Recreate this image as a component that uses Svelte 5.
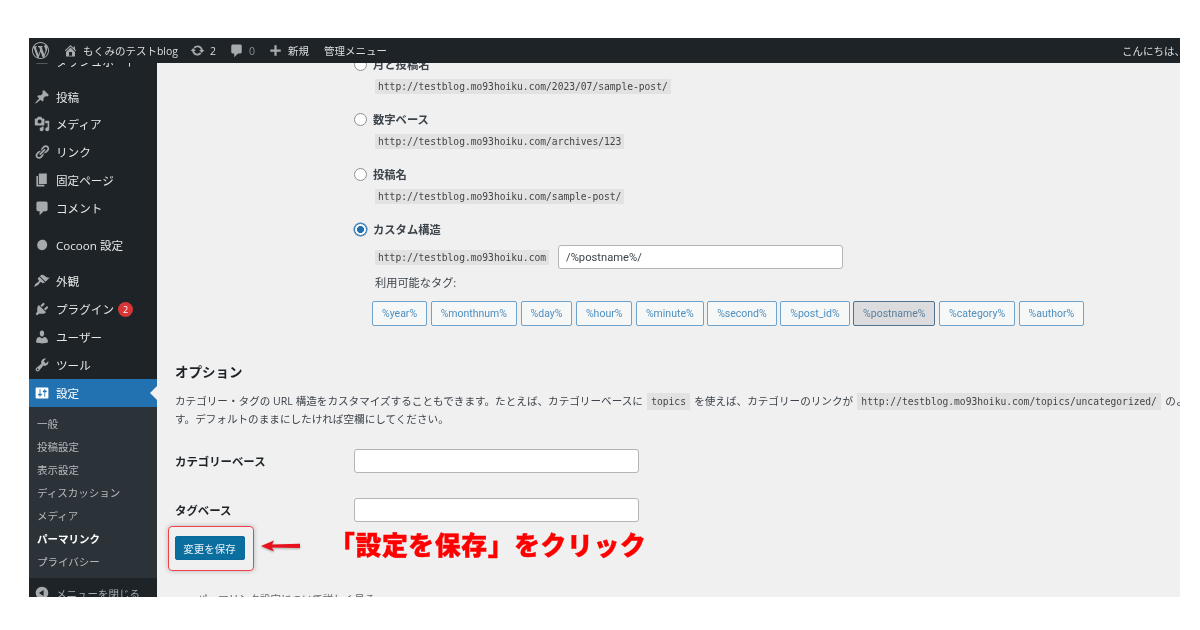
<script>
	const icons = {
		wp: 'M20 10c0-5.51-4.49-10-10-10C4.48 0 0 4.49 0 10c0 5.52 4.48 10 10 10 5.51 0 10-4.48 10-10zM7.78 15.37L4.37 6.22c.55-.02 1.17-.08 1.17-.08.5-.06.44-1.13-.06-1.11 0 0-1.45.11-2.37.11-.18 0-.37 0-.58-.01C4.12 2.69 6.87 1.11 10 1.11c2.33 0 4.45.87 6.05 2.34-.68-.11-1.65.39-1.65 1.58 0 .74.45 1.36.9 2.1.35.61.55 1.36.55 2.46 0 1.49-1.4 5-1.4 5l-3.03-8.37c.54-.02.82-.17.82-.17.5-.05.44-1.25-.06-1.22 0 0-1.44.12-2.38.12-.87 0-2.33-.12-2.33-.12-.5-.03-.56 1.2-.06 1.22l.92.08 1.26 3.41zM17.41 10c.24-.64.74-1.87.43-4.25.7 1.29 1.05 2.71 1.05 4.25 0 3.29-1.73 6.24-4.4 7.78.97-2.59 1.94-5.2 2.92-7.78zM6.1 18.09C3.12 16.65 1.11 13.53 1.11 10c0-1.3.23-2.48.72-3.59C3.25 10.3 4.67 14.2 6.1 18.09zm4.03-6.63l2.58 6.98c-.86.29-1.76.45-2.71.45-.79 0-1.57-.11-2.29-.33.81-2.38 1.62-4.74 2.42-7.1z',
		home: 'M16 8.5l1.53 1.53-1.06 1.06L10 4.62l-6.47 6.47-1.06-1.06L10 2.5l4 4v-2h2v4zm-6-2.46l6 5.99V18H4v-5.97zM12 17v-5H8v5h4z',
		update: 'M10.2 3.28c3.53 0 6.43 2.61 6.92 6h2.08l-3.5 4-3.5-4h2.32c-.45-1.97-2.21-3.45-4.32-3.45-1.45 0-2.73.71-3.54 1.78L4.95 5.66C6.23 4.2 8.11 3.28 10.2 3.28zm-.4 13.44c-3.52 0-6.43-2.61-6.92-6H.8l3.5-4c1.17 1.33 2.33 2.67 3.5 4H5.48c.45 1.97 2.21 3.45 4.32 3.45 1.45 0 2.73-.71 3.54-1.78l1.71 1.95c-1.28 1.46-3.15 2.38-5.25 2.38z',
		comment: 'M5 2h10c1.1 0 2 .9 2 2v8c0 1.1-.9 2-2 2h-3l-5 5v-5H5c-1.1 0-2-.9-2-2V4c0-1.1.9-2 2-2z',
		plus: 'M17 8.5v3h-5.5V17h-3v-5.5H3v-3h5.5V3h3v5.5z',
		dashboard: 'M3 10h14v3H3z',
		pin: 'M10.44 3.02l1.82-1.82 6.36 6.35-1.83 1.82c-1.05-.68-2.48-.57-3.41.36l-.75.75c-.92.93-1.04 2.35-.35 3.41l-1.83 1.82-2.41-2.41-2.8 2.79c-.42.42-3.38 2.71-3.8 2.29s1.86-3.39 2.28-3.81l2.79-2.79L4.1 9.36l1.83-1.82c1.05.69 2.48.57 3.4-.36l.75-.75c.93-.92 1.05-2.35.36-3.41z',
		media: 'M13 11V4c0-.55-.45-1-1-1h-1.67L9 1H5L3.67 3H2c-.55 0-1 .45-1 1v7c0 .55.45 1 1 1h10c.55 0 1-.45 1-1zM7 4.5c1.38 0 2.5 1.12 2.5 2.5S8.38 9.5 7 9.5 4.5 8.38 4.5 7 5.62 4.5 7 4.5zM14 6h5v10.5c0 1.38-1.12 2.5-2.5 2.5S14 17.88 14 16.5s1.12-2.5 2.5-2.5c.17 0 .34.02.5.05V9h-3V6zm-4 8.05V13h2v3.5c0 1.38-1.12 2.5-2.5 2.5S7 17.88 7 16.5 8.12 14 9.5 14c.17 0 .34.02.5.05z',
		link: 'M17.74 2.76c1.68 1.69 1.68 4.41 0 6.1l-1.53 1.52c-1.12 1.12-2.7 1.47-4.14 1.09l2.62-2.61.76-.77.76-.76c.84-.84.84-2.2 0-3.04-.84-.85-2.2-.85-3.04 0l-.77.76-3.38 3.38c-.37-1.44-.02-3.02 1.1-4.14l1.52-1.53c1.69-1.68 4.42-1.68 6.1 0zM8.59 13.43l5.34-5.34c.42-.42.42-1.1 0-1.52-.44-.43-1.13-.39-1.53 0l-5.33 5.34c-.42.42-.42 1.1 0 1.52.44.43 1.13.39 1.52 0zm-.76 2.29l4.14-4.15c.38 1.44.03 3.02-1.09 4.14l-1.52 1.53c-1.69 1.68-4.41 1.68-6.1 0-1.68-1.68-1.68-4.42 0-6.1l1.53-1.52c1.12-1.12 2.7-1.47 4.14-1.1l-4.14 4.15c-.85.84-.85 2.2 0 3.05.84.84 2.2.84 3.04 0z',
		pages: 'M6 15V2h10v13H6zm-1 1h8v2H3V5h2v11z',
		cocoon: 'M10.5 3.5c3.6 0 6 2.6 6 6.3 0 3.8-2.8 6.7-6.5 6.7-3.6 0-6-2.5-6-6.1 0-3.9 2.8-6.9 6.5-6.9z',
		brush: 'M14.48 11.06L7.41 3.99l1.5-1.5c.5-.56 2.3-.47 3.51.32 1.21.8 1.43 1.28 2.91 2.1 1.18.64 2.45 1.26 4.45.85zm-.71.71L6.7 4.7 4.93 6.47c-.39.39-.39 1.02 0 1.41l1.06 1.06c.39.39.39 1.03 0 1.42-.6.6-1.43 1.11-2.21 1.69-.35.26-.7.53-1.01.84C1.43 13.71 0 17.6 0 17.6s3.89-1.43 5.29-2.83c.31-.31.58-.66.84-1.01.58-.78 1.09-1.61 1.69-2.21.39-.39 1.03-.39 1.42 0l1.06 1.06c.39.39 1.02.39 1.41 0z',
		plugin: 'M13.11 4.36L9.87 7.6 8 5.73l3.24-3.24c.35-.34 1.05-.2 1.56.32.52.51.66 1.21.31 1.55zm-8 1.77l.91-1.12 9.01 9.01-1.19.84c-.71.71-2.63 1.16-3.82 1.16H6.14L4.9 17.26c-.59.59-1.54.59-2.12 0-.59-.58-.59-1.53 0-2.12l1.24-1.24v-3.88c0-1.13.4-3.19 1.09-3.89zm7.26 3.97l3.24-3.24c.34-.35 1.04-.21 1.55.31.52.51.66 1.21.31 1.55l-3.24 3.25z',
		user: 'M10 9.25c-2.27 0-2.73-3.44-2.73-3.44C7 4.02 7.82 2 9.97 2c2.16 0 2.98 2.02 2.71 3.81 0 0-.41 3.44-2.68 3.44zm0 2.57L12.72 10c2.39 0 4.52 2.33 4.52 4.53v2.49s-3.65 1.13-7.24 1.13c-3.65 0-7.24-1.13-7.24-1.13v-2.49c0-2.25 1.94-4.48 4.47-4.48z',
		wrench: 'M16.68 9.77c-1.34 1.34-3.3 1.67-4.95.99l-5.41 6.52c-.99.99-2.59.99-3.58 0s-.99-2.59 0-3.57l6.52-5.42c-.68-1.65-.35-3.61.99-4.95 1.28-1.28 3.12-1.62 4.72-1.06l-2.89 2.89 2.82 2.82 2.86-2.87c.53 1.58.18 3.39-1.08 4.65zM3.81 16.21c.4.39 1.04.39 1.43 0 .4-.4.4-1.04 0-1.43-.39-.4-1.03-.4-1.43 0-.39.39-.39 1.03 0 1.43z',
		settings: 'M18 16V4c0-.55-.45-1-1-1H3c-.55 0-1 .45-1 1v12c0 .55.45 1 1 1h14c.55 0 1-.45 1-1zM8 11h1c.55 0 1 .45 1 1s-.45 1-1 1H8v1.5c0 .28-.22.5-.5.5s-.5-.22-.5-.5V13H6c-.55 0-1-.45-1-1s.45-1 1-1h1V5.5c0-.28.22-.5.5-.5s.5.22.5.5V11zm5-2h-1c-.55 0-1-.45-1-1s.45-1 1-1h1V5.5c0-.28.22-.5.5-.5s.5.22.5.5V7h1c.55 0 1 .45 1 1s-.45 1-1 1h-1v5.5c0 .28-.22.5-.5.5s-.5-.22-.5-.5V9z',
		collapse: 'M10 2.16c4.33 0 7.84 3.51 7.84 7.84s-3.51 7.84-7.84 7.84S2.16 14.33 2.16 10 5.71 2.16 10 2.16zm2 11.72V6.12L6.18 9.97z'
	};

	const menuGroups = [
		[{ icon: 'dashboard', label: 'ダッシュボード' }],
		[
			{ icon: 'pin', label: '投稿' },
			{ icon: 'media', label: 'メディア' },
			{ icon: 'link', label: 'リンク' },
			{ icon: 'pages', label: '固定ページ' },
			{ icon: 'comment', label: 'コメント' }
		],
		[{ icon: 'cocoon', label: 'Cocoon 設定' }],
		[
			{ icon: 'brush', label: '外観' },
			{ icon: 'plugin', label: 'プラグイン', badge: 2 },
			{ icon: 'user', label: 'ユーザー' },
			{ icon: 'wrench', label: 'ツール' },
			{ icon: 'settings', label: '設定', active: true }
		]
	];

	const submenu = ['一般', '投稿設定', '表示設定', 'ディスカッション', 'メディア', 'パーマリンク', 'プライバシー'];

	const structures = [
		{ label: '月と投稿名', url: 'http://testblog.mo93hoiku.com/2023/07/sample-post/' },
		{ label: '数字ベース', url: 'http://testblog.mo93hoiku.com/archives/123' },
		{ label: '投稿名', url: 'http://testblog.mo93hoiku.com/sample-post/' }
	];

	const tags = ['%year%', '%monthnum%', '%day%', '%hour%', '%minute%', '%second%', '%post_id%', '%postname%', '%category%', '%author%'];
</script>

{#snippet icon(name, size = 16)}
	<svg class="icon" width={size} height={size} viewBox="0 0 20 20" aria-hidden="true"><path d={icons[name]} /></svg>
{/snippet}

<div class="shot">
	<header class="adminbar">
		<span class="bar-item logo">{@render icon('wp', 17)}</span>
		<span class="bar-item site">{@render icon('home', 15)}<span>もくみのテストblog</span></span>
		<span class="bar-item updates">{@render icon('update', 15)}<span>2</span></span>
		<span class="bar-item comments">{@render icon('comment', 15)}<span class="dim">0</span></span>
		<span class="bar-item new">{@render icon('plus', 15)}<span>新規</span></span>
		<span class="bar-item manage">管理メニュー</span>
		<span class="greeting">こんにちは、</span>
	</header>

	<aside class="sidebar">
		<div class="menu">
			{#each menuGroups as group}
				<ul class="group">
					{#each group as item}
						<li class="item" class:active={item.active}>
							{@render icon(item.icon)}
							<span>{item.label}</span>
							{#if item.badge}
								<span class="badge">{item.badge}</span>
							{/if}
						</li>
					{/each}
				</ul>
			{/each}
			<ul class="submenu">
				{#each submenu as sub}
					<li class:current={sub === 'パーマリンク'}>{sub}</li>
				{/each}
			</ul>
			<div class="collapse">
				{@render icon('collapse')}
				<span>メニューを閉じる</span>
			</div>
		</div>
	</aside>

	<main class="content">
		<div class="structures">
			{#each structures as s}
				<div class="structure">
					<label class="choice"><input type="radio" name="structure" /><span>{s.label}</span></label>
					<code class="url">{s.url}</code>
				</div>
			{/each}
			<div class="structure">
				<label class="choice"><input type="radio" name="structure" checked /><span>カスタム構造</span></label>
				<div class="custom">
					<code>http://testblog.mo93hoiku.com</code>
					<input class="field wide" type="text" value="/%postname%/" />
				</div>
				<p class="tags-label">利用可能なタグ:</p>
				<div class="tags">
					{#each tags as t}
						<button class="tag" class:on={t === '%postname%'}>{t}</button>
					{/each}
				</div>
			</div>
		</div>

		<h2>オプション</h2>
		<p class="desc">
			カテゴリー・タグの URL 構造をカスタマイズすることもできます。たとえば、カテゴリーベースに <code>topics</code> を使えば、カテゴリーのリンクが <code>http://testblog.mo93hoiku.com/topics/uncategorized/</code> のようになります。空<br />す。デフォルトのままにしたければ空欄にしてください。
		</p>

		<div class="form-row first">
			<span class="form-label">カテゴリーベース</span>
			<input class="field" type="text" />
		</div>
		<div class="form-row">
			<span class="form-label">タグベース</span>
			<input class="field" type="text" />
		</div>

		<div class="save-row">
			<div class="ring"><button class="save">変更を保存</button></div>
			<svg class="arrow" width="42" height="14" viewBox="0 0 42 14" aria-hidden="true"><path d="M1 7l13-5.5-2 4 28-.8v4.2L12 8.6l2 4z" /></svg>
			<strong class="callout">「設定を保存」をクリック</strong>
		</div>

		<p class="cutoff">パーマリンク設定について詳しく見る</p>
	</main>
</div>

<style>
	:global(body) {
		background: #fff;
	}

	.shot {
		display: grid;
		grid-template-columns: 128px 1fr;
		grid-template-rows: 25px 1fr;
		width: 1151px;
		height: 559px;
		margin: 38px 0 0 29px;
		overflow: hidden;
		background: #f0f0f0;
		color: #3c434a;
		font-family: 'Open Sans', 'Noto Sans CJK JP', sans-serif;
		font-size: 10.5px;
		filter: blur(0.45px);
	}

	ul {
		list-style: none;
		margin: 0;
		padding: 0;
	}

	.icon {
		flex: none;
		fill: currentColor;
	}

	/* admin bar */
	.adminbar {
		grid-column: 1 / -1;
		display: flex;
		align-items: center;
		background: #1d2327;
		color: #dcdcde;
		white-space: nowrap;
	}

	.bar-item {
		display: flex;
		align-items: center;
		gap: 5px;
	}

	.adminbar .icon {
		color: #a7aaad;
	}

	.logo {
		margin-left: 3px;
	}

	.site {
		margin-left: 14px;
	}

	.updates {
		margin-left: 12px;
	}

	.comments {
		margin-left: 13px;
	}

	.new {
		margin-left: 13px;
	}

	.manage {
		margin-left: 15px;
	}

	.dim {
		color: #8a8f94;
	}

	.greeting {
		margin-left: auto;
		margin-right: -5px;
		flex: none;
	}

	/* sidebar */
	.sidebar {
		overflow: hidden;
		background: #1d2327;
		color: #e6e6e7;
		font-size: 11.6px;
	}

	.menu {
		margin-top: -16px;
	}

	.group {
		margin-bottom: 9px;
	}

	.group:first-child {
		margin-bottom: 8px;
	}

	.group:nth-child(4) {
		margin-bottom: 0;
	}

	.item {
		position: relative;
		display: flex;
		align-items: center;
		gap: 6px;
		height: 27.8px;
		padding-left: 5px;
		white-space: nowrap;
	}

	.item .icon {
		color: #a7aaad;
	}

	.item.active {
		background: #2271b1;
		color: #fff;
	}

	.item.active .icon {
		color: #fff;
	}

	.item.active::after {
		content: '';
		position: absolute;
		right: 0;
		top: 50%;
		margin-top: -7px;
		border: 7px solid transparent;
		border-left-width: 0;
		border-right-color: #f0f0f0;
	}

	.badge {
		display: flex;
		align-items: center;
		justify-content: center;
		width: 15px;
		height: 15px;
		margin-left: -2px;
		border-radius: 50%;
		background: #d63638;
		color: #fff;
		font-size: 9px;
	}

	.submenu {
		padding: 6.5px 0 4px 8px;
		background: #2c3338;
		color: #b4b9be;
		font-size: 10.5px;
	}

	.submenu li {
		height: 23px;
		line-height: 23px;
		white-space: nowrap;
	}

	.submenu .current {
		color: #fff;
		font-weight: 700;
	}

	.collapse {
		display: flex;
		align-items: center;
		gap: 6px;
		height: 28px;
		margin-top: 1px;
		padding-left: 5px;
		color: #a7aaad;
		white-space: nowrap;
		font-size: 10.5px;
	}

	/* content */
	.content {
		overflow: hidden;
		min-width: 0;
		padding-left: 18px;
		white-space: nowrap;
	}

	.structures {
		display: flex;
		flex-direction: column;
		gap: 16px;
		margin-top: -8px;
		margin-left: 179px;
	}

	.structure {
		display: flex;
		flex-direction: column;
		align-items: flex-start;
	}

	.choice {
		display: flex;
		align-items: center;
		gap: 6px;
		height: 18px;
		font-size: 11.3px;
		font-weight: 700;
	}

	.choice input {
		appearance: none;
		flex: none;
		width: 13px;
		height: 13px;
		margin: 0;
		border: 1px solid #8c8f94;
		border-radius: 50%;
		background: #fff;
	}

	.choice input:checked {
		border-color: #2271b1;
		box-shadow: 0 0 0 0.5px #2271b1;
		background: radial-gradient(circle, #2271b1 3.2px, #fff 3.8px);
	}

	code {
		padding: 3px 3px;
		background: #e2e2e2;
		color: #444;
		font-family: 'DejaVu Sans Mono', monospace;
		font-size: 9.65px;
		line-height: 1;
	}

	.desc code {
		padding: 3px 4.5px;
		margin: 0 1px;
	}

	.url {
		margin: 5.5px 0 0 21px;
	}

	.custom {
		display: flex;
		align-items: center;
		gap: 9px;
		margin: 7px 0 0 21px;
	}

	.field {
		box-sizing: border-box;
		width: 285px;
		height: 24px;
		padding: 0 7px;
		border: 1px solid #b4b4b4;
		border-radius: 3px;
		background: #fff;
		color: #3c434a;
		font-family: 'Roboto', sans-serif;
		font-size: 11.2px;
	}

	.tags-label {
		margin: 5px 0 0 21px;
		font-size: 11.2px;
		line-height: 18px;
	}

	.tags {
		display: flex;
		gap: 3.5px;
		margin: 9px 0 0 18px;
	}

	.tag {
		height: 25px;
		padding: 0 9px;
		border: 1px solid #6fa3cc;
		border-radius: 2px;
		background: #f6f7f7;
		color: #4f8fbe;
		font-family: 'Roboto', sans-serif;
		font-size: 10.5px;
	}

	.tag.on {
		border-color: #4f7390;
		background: #dcdcde;
		color: #5a7f9e;
	}

	h2 {
		margin: 36px 0 0;
		color: #1d2327;
		font-size: 13.5px;
		font-weight: 700;
		line-height: 20px;
	}

	.desc {
		margin: 10px 0 0;
		font-size: 10.6px;
		line-height: 18px;
	}

	.form-row {
		display: grid;
		grid-template-columns: 179px 285px;
		align-items: center;
		margin-top: 25px;
	}

	.form-row.first {
		margin-top: 21px;
	}

	.form-label {
		color: #1d2327;
		font-size: 11.4px;
		font-weight: 700;
	}

	.save-row {
		display: flex;
		align-items: center;
		margin-top: 4px;
		margin-left: -7px;
	}

	.ring {
		padding: 9px 8.5px 9.5px 5.5px;
		border: 1.5px solid #f0404a;
		border-radius: 4px;
		box-shadow: 0 0 5px rgba(0, 0, 0, 0.25);
	}

	.save {
		display: block;
		width: 70px;
		height: 24px;
		padding: 0;
		border: 1px solid #0a6a9c;
		border-radius: 2px;
		background: #0a6f9f;
		color: #e8f0f5;
		font-family: 'Noto Sans CJK JP', sans-serif;
		font-size: 10.5px;
	}

	.arrow {
		flex: none;
		margin: 0 0 6px 6px;
		fill: #e8101c;
		filter: drop-shadow(0 1px 1px rgba(0, 0, 0, 0.3));
	}

	.callout {
		margin: 0 0 10px 27px;
		color: #f00;
		font-family: 'Noto Sans CJK JP', sans-serif;
		font-size: 25.8px;
		font-weight: 900;
		line-height: 30px;
		letter-spacing: 0.65px;
		-webkit-text-stroke: 0.4px #f00;
	}

	.cutoff {
		margin: 20px 0 0 22px;
		color: #666;
		font-size: 10.5px;
	}
</style>
